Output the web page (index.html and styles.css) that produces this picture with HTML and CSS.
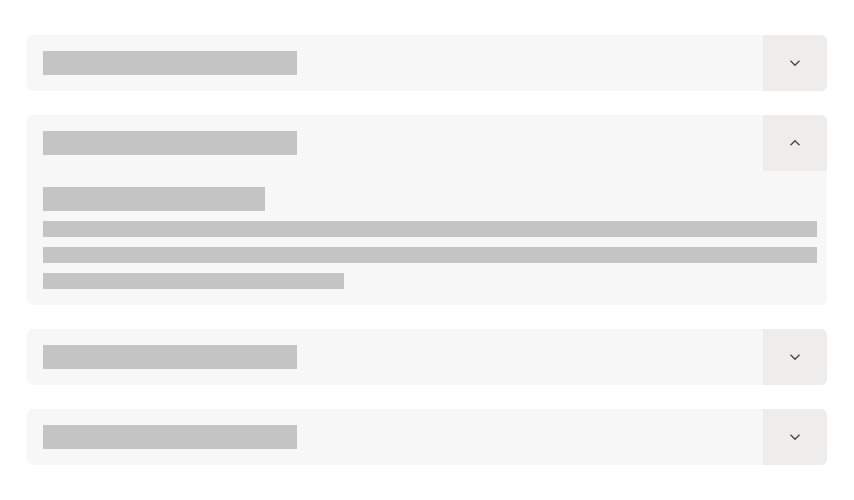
FILE: index.html
```html
<!DOCTYPE html>
<html lang="en">
<head>
<meta charset="utf-8">
<title>Accordion loading</title>
<link rel="stylesheet" href="styles.css">
</head>
<body>
<main class="accordion">
  <section class="item">
    <div class="item-head">
      <div class="head-title"><span class="skel skel-title"></span></div>
      <button class="toggle" aria-label="Expand">
        <svg viewBox="0 0 12 8" width="12" height="8"><path d="M1.5 1.8 6 6.2 10.5 1.8" fill="none" stroke="#4a4a4a" stroke-width="1.4"/></svg>
      </button>
    </div>
  </section>

  <section class="item open">
    <div class="item-head">
      <div class="head-title"><span class="skel skel-title"></span></div>
      <button class="toggle" aria-label="Collapse">
        <svg viewBox="0 0 12 8" width="12" height="8"><path d="M1.5 6.2 6 1.8 10.5 6.2" fill="none" stroke="#4a4a4a" stroke-width="1.4"/></svg>
      </button>
    </div>
    <div class="item-body">
      <span class="skel skel-sub"></span>
      <div class="lines">
        <span class="skel skel-line"></span>
        <span class="skel skel-line"></span>
        <span class="skel skel-line short"></span>
      </div>
    </div>
  </section>

  <section class="item">
    <div class="item-head">
      <div class="head-title"><span class="skel skel-title"></span></div>
      <button class="toggle" aria-label="Expand">
        <svg viewBox="0 0 12 8" width="12" height="8"><path d="M1.5 1.8 6 6.2 10.5 1.8" fill="none" stroke="#4a4a4a" stroke-width="1.4"/></svg>
      </button>
    </div>
  </section>

  <section class="item">
    <div class="item-head">
      <div class="head-title"><span class="skel skel-title"></span></div>
      <button class="toggle" aria-label="Expand">
        <svg viewBox="0 0 12 8" width="12" height="8"><path d="M1.5 1.8 6 6.2 10.5 1.8" fill="none" stroke="#4a4a4a" stroke-width="1.4"/></svg>
      </button>
    </div>
  </section>
</main>
</body>
</html>
```
FILE: styles.css
```css
html, body {
  margin: 0;
  padding: 0;
  background: #ffffff;
  font-family: "Liberation Sans", Arial, sans-serif;
}

.accordion {
  width: 800px;
  margin: 35px auto 0;
  display: flex;
  flex-direction: column;
  gap: 24px;
}

.item {
  background: #f7f7f7;
  border-radius: 6px;
  overflow: hidden;
}

.item-head {
  display: flex;
  height: 56px;
}

.head-title {
  flex: 1;
  display: flex;
  align-items: center;
  padding-left: 16px;
}

.toggle {
  width: 64px;
  height: 56px;
  border: 0;
  padding: 0;
  margin: 0;
  background: #eeedec;
  display: flex;
  align-items: center;
  justify-content: center;
  cursor: pointer;
}

.toggle svg {
  display: block;
}

.skel {
  display: block;
  background: #c4c4c4;
}

.skel-title {
  width: 254px;
  height: 24px;
}

.item-body {
  padding: 16px 10px 16px 16px;
}

.skel-sub {
  width: 222px;
  height: 24px;
}

.lines {
  margin-top: 10px;
  display: flex;
  flex-direction: column;
  gap: 10px;
}

.skel-line {
  height: 16px;
  width: 100%;
}

.skel-line.short {
  width: 301px;
}
```
